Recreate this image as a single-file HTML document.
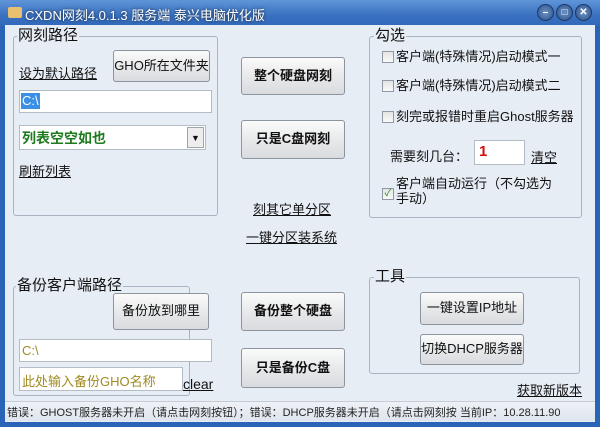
<!DOCTYPE html><html><head><meta charset="utf-8"><style>
*{margin:0;padding:0;box-sizing:border-box}
body{width:600px;height:427px;overflow:hidden;font-family:"Liberation Sans","Noto Sans CJK SC",sans-serif;font-size:13px;color:#111;background:#2a64b8;position:relative}
.a{position:absolute;white-space:nowrap}
#title{left:0;top:0;width:600px;height:26px;background:linear-gradient(#5f95d8,#3a70c0 60%,#3169ba)}
#body{left:5px;top:25px;width:590px;height:397px;background:#e7edf5}
.grp{position:absolute;border:1px solid #a9b4c2;border-radius:3px}
.gl{position:absolute;background:#e7edf5;font-size:15px;padding:0 1px;line-height:15px}
.btn{position:absolute;border:1px solid #8c949e;border-radius:3px;background:linear-gradient(#fbfbfb,#e8e9eb 50%,#d9dbde);text-align:center;font-size:13px}
.b{font-weight:bold}
.inp{position:absolute;background:#fff;border:1px solid #b4bcc6}
.u{text-decoration:underline}
.cb{position:absolute;width:12px;height:12px;border:1px solid #8f9aa6;background:linear-gradient(#e4e4e4,#fafafa)}
.tb{position:absolute;width:17px;height:17px;border-radius:50%;background:radial-gradient(#6c93c6,#2b508a);border:1px solid #1c3a6a;color:#fff;font-size:10px;text-align:center;line-height:15px;font-weight:bold}
</style></head><body>
<div class="a" id="title"></div>
<div class="a" style="left:8px;top:7px;width:14px;height:11px;background:#e8c070;border-radius:2px"></div>
<div class="a" style="left:25px;top:5px;color:#fff;font-size:13px;text-shadow:0 0 3px #123">CXDN网刻4.0.1.3 服务端 泰兴电脑优化版</div>
<div class="tb" style="left:537px;top:4px">–</div>
<div class="tb" style="left:556px;top:4px">□</div>
<div class="tb" style="left:575px;top:4px">✕</div>
<div class="a" id="body"></div>

<div class="grp" style="left:13px;top:36px;width:205px;height:180px"></div>
<div class="gl" style="left:17px;top:28px">网刻路径</div>
<div class="btn" style="left:113px;top:50px;width:97px;height:32px;line-height:29px">GHO所在文件夹</div>
<div class="a u" style="left:19px;top:63px">设为默认路径</div>
<div class="inp" style="left:19px;top:90px;width:193px;height:23px"></div>
<div class="a" style="left:21px;top:93px;background:#3b8fe4;color:#fff;height:16px;line-height:16px;padding:0 1px">C:\</div>
<div class="inp" style="left:19px;top:125px;width:187px;height:25px"></div>
<div class="a b" style="left:22px;top:128px;color:#1d7a1d;font-size:14px">列表空空如也</div>
<div class="a" style="left:187px;top:127px;width:17px;height:21px;border:1px solid #9aa;background:#eee;font-size:9px;text-align:center;line-height:20px">▼</div>
<div class="a u" style="left:19px;top:161px">刷新列表</div>

<div class="btn b" style="left:241px;top:57px;width:104px;height:38px;line-height:35px">整个硬盘网刻</div>
<div class="btn b" style="left:241px;top:120px;width:104px;height:39px;line-height:36px">只是C盘网刻</div>
<div class="a u" style="left:253px;top:199px">刻其它单分区</div>
<div class="a u" style="left:246px;top:227px">一键分区装系统</div>

<div class="grp" style="left:369px;top:36px;width:213px;height:182px"></div>
<div class="gl" style="left:374px;top:28px">勾选</div>
<div class="cb" style="left:382px;top:51px"></div><div class="a" style="left:396px;top:46px">客户端(特殊情况)启动模式一</div>
<div class="cb" style="left:382px;top:80px"></div><div class="a" style="left:396px;top:75px">客户端(特殊情况)启动模式二</div>
<div class="cb" style="left:382px;top:111px"></div><div class="a" style="left:396px;top:106px">刻完或报错时重启Ghost服务器</div>
<div class="a" style="left:390px;top:146px">需要刻几台：</div>
<div class="inp" style="left:474px;top:140px;width:51px;height:25px"></div>
<div class="a b" style="left:479px;top:143px;color:#d01010;font-size:15px">1</div>
<div class="a u" style="left:531px;top:147px">清空</div>
<div class="cb" style="left:382px;top:188px;color:#1a8a1a;font-size:10px;line-height:10px;text-align:center">✓</div>
<div class="a" style="left:396px;top:176px;line-height:15px">客户端自动运行（不勾选为<br>手动）</div>

<div class="grp" style="left:13px;top:286px;width:177px;height:110px"></div>
<div class="gl" style="left:16px;top:278px">备份客户端路径</div>
<div class="btn" style="left:113px;top:293px;width:96px;height:37px;line-height:34px">备份放到哪里</div>
<div class="inp" style="left:19px;top:339px;width:193px;height:23px"></div>
<div class="a" style="left:22px;top:343px;color:#a08a20">C:\</div>
<div class="inp" style="left:19px;top:367px;width:164px;height:24px"></div>
<div class="a" style="left:22px;top:371px;color:#a08a20">此处输入备份GHO名称</div>
<div class="a u" style="left:183px;top:376px;font-size:14px">clear</div>

<div class="btn b" style="left:241px;top:292px;width:104px;height:39px;line-height:36px">备份整个硬盘</div>
<div class="btn b" style="left:241px;top:348px;width:104px;height:40px;line-height:37px">只是备份C盘</div>

<div class="grp" style="left:369px;top:277px;width:211px;height:97px"></div>
<div class="gl" style="left:374px;top:269px">工具</div>
<div class="btn" style="left:420px;top:292px;width:104px;height:33px;line-height:30px">一键设置IP地址</div>
<div class="btn" style="left:420px;top:334px;width:104px;height:31px;line-height:28px">切换DHCP服务器</div>
<div class="a u" style="left:517px;top:380px">获取新版本</div>

<div class="a" style="left:5px;top:401px;width:590px;height:20px;background:linear-gradient(#eef2f7,#dfe5ee);border-top:1px solid #c5ccd6"></div>
<div class="a" style="left:7px;top:404px;font-size:11px;color:#222">错误：GHOST服务器未开启（请点击网刻按钮）；错误：DHCP服务器未开启（请点击网刻按 当前IP：10.28.11.90</div>
</body></html>
